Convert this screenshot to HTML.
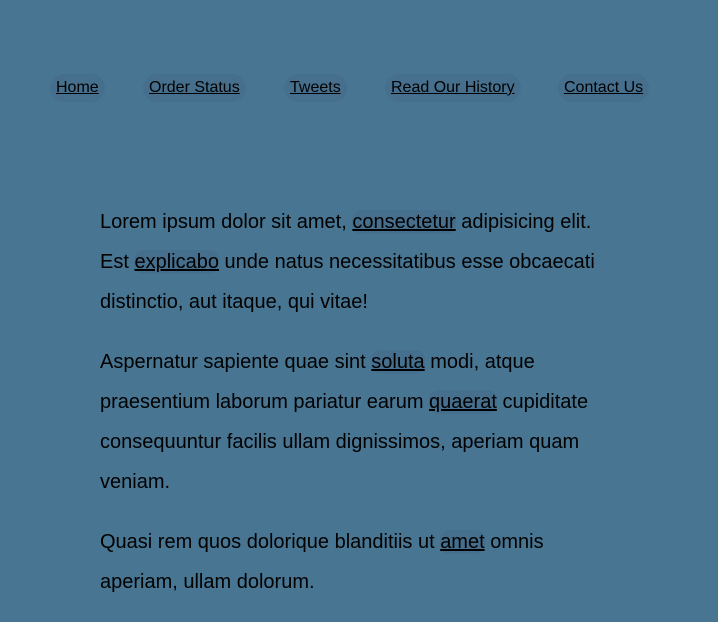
<!DOCTYPE html>
<html><head><meta charset="utf-8"><style>
html,body{margin:0;padding:0;}
body{width:718px;height:536px;overflow:hidden;background:#487592;font-family:"Liberation Sans",Arial,sans-serif;color:#000;position:relative;}
a{color:#000;text-decoration:underline;background:#456f8c;border-radius:10px;}
.nav a{position:absolute;top:74px;font-size:16px;line-height:16px;padding:6px 6px;border-radius:14px;}
.c{position:absolute;left:100px;top:202px;width:510px;font-size:20px;line-height:40px;}
.c p{margin:0 0 20px 0;}
.c a{padding:1px 0;}
</style></head><body>
<div class="nav">
<a style="left:50px">Home</a>
<a style="left:143px">Order Status</a>
<a style="left:284px">Tweets</a>
<a style="left:385px">Read Our History</a>
<a style="left:558px">Contact Us</a>
</div>
<div class="c">
<p>Lorem ipsum dolor sit amet, <a>consectetur</a> adipisicing elit. Est <a>explicabo</a> unde natus necessitatibus esse obcaecati distinctio, aut itaque, qui vitae!</p>
<p>Aspernatur sapiente quae sint <a>soluta</a> modi, atque praesentium laborum pariatur earum <a>quaerat</a> cupiditate consequuntur facilis ullam dignissimos, aperiam quam veniam.</p>
<p>Quasi rem quos dolorique blanditiis ut <a>amet</a> omnis aperiam, ullam dolorum.</p>
</div>
</body></html>
